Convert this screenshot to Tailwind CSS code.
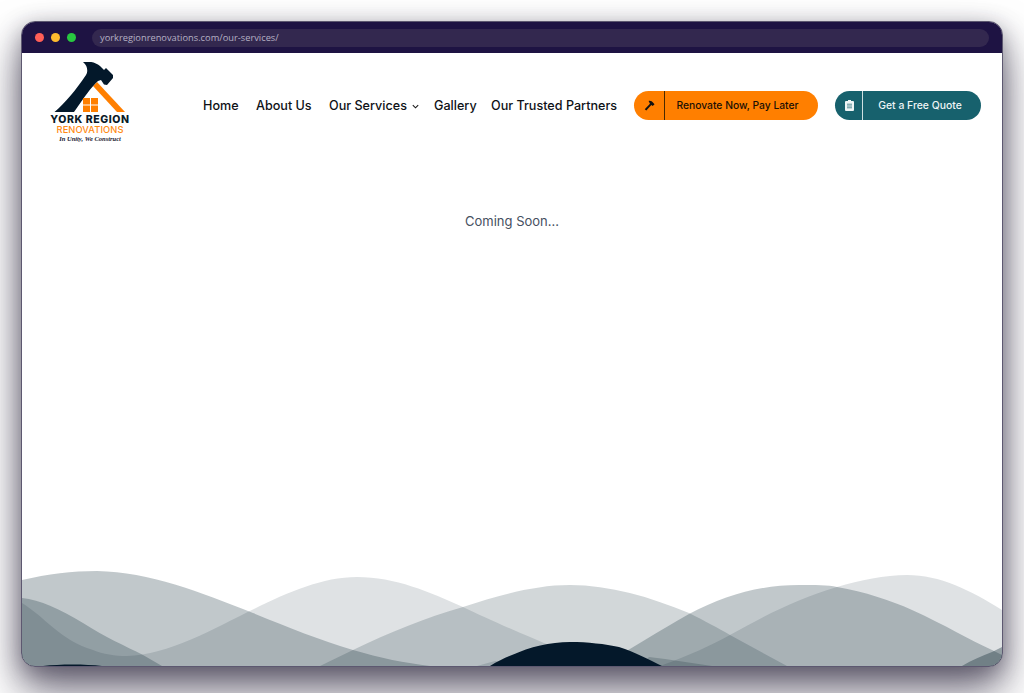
<!DOCTYPE html>
<html>
<head>
<meta charset="utf-8">
<script src="https://cdn.jsdelivr.net/npm/@tailwindcss/browser@4"></script>
</head>
<body class="m-0 h-[693px] w-[1024px] overflow-hidden bg-white font-['Inter','Liberation_Sans',sans-serif]">
<div class="pt-[21px] pl-[21px]">
  <div class="relative flex h-[646px] w-[982px] flex-col overflow-hidden rounded-[14px] border border-[#5d5870] bg-white shadow-[0_24px_44px_rgba(30,24,48,0.62),0_6px_22px_rgba(30,24,48,0.36)]">
    <div class="flex h-[31px] shrink-0 items-center gap-[7px] bg-[#1e1343] pl-[13px] pr-[13px]">
      <span class="size-[9px] rounded-full bg-[#ff5f57]"></span>
      <span class="size-[9px] rounded-full bg-[#febc2e]"></span>
      <span class="size-[9px] rounded-full bg-[#28c840]"></span>
      <div class="ml-[9px] flex h-[18px] flex-1 items-center rounded-[9px] bg-[#33284f] pl-[8px] text-[9.3px] text-[#b5b0c4] font-['Open_Sans',sans-serif]">yorkregionrenovations.com/our-services/</div>
    </div>
    <header class="flex h-[106px] shrink-0 items-start">
      <div class="ml-[28px] mt-[9px] flex w-[80px] flex-col items-center">
        <svg class="h-[50px] w-[80px]" viewBox="50 62 80 50" aria-hidden="true">
          <path d="M93 86 L97 82 L125 112 L117 112 Z" fill="#ff7f00"/>
          <path d="M83 62 C89 61 95 62 100 66 L104 70 L106 68 L113 75 L113 78 L107 85 L104 84.5 L101 80 L98 81 C92 86 83 99 74 112 L54.5 112 C65 103 76 90 86 75 C88 72 88 66 83 62 Z" fill="#03182a"/>
          <g fill="#ff7f00">
            <rect x="83" y="98" width="7" height="6.5"/><rect x="91" y="98" width="7" height="6.5"/>
            <rect x="83" y="105.5" width="7" height="6.5"/><rect x="91" y="105.5" width="7" height="6.5"/>
          </g>
        </svg>
        <div class="mt-[2px] whitespace-nowrap text-[10.5px] leading-[11px] font-extrabold tracking-[0.055em] text-[#0b1a28]">YORK REGION</div>
        <div class="mt-[-1px] whitespace-nowrap text-[9.3px] leading-[11px] font-medium tracking-[0.01em] text-[#ff8a14]">RENOVATIONS</div>
        <div class="mt-[0px] whitespace-nowrap text-[6.5px] leading-[8px] font-bold italic text-[#1a2030] font-['Liberation_Serif',serif]">In Unity, We Construct</div>
      </div>
      <nav class="ml-[73px] mt-[39px] flex h-[29px] items-center gap-[17px] text-[12.6px] font-medium whitespace-nowrap text-[#0e1116]">
        <a class="w-[36px]">Home</a>
        <a class="w-[56px]">About Us</a>
        <a class="flex w-[88px] items-center gap-[4px]">Our Services
          <svg class="size-[9px] shrink-0" viewBox="0 0 10 10" fill="none" stroke="#1a1a1a" stroke-width="1.2"><path d="M2 3.5 L5 6.5 L8 3.5"/></svg>
        </a>
        <a class="w-[40px]">Gallery</a>
        <a class="w-[126px]">Our Trusted Partners</a>
      </nav>
      <div class="ml-[17px] mt-[38px] flex h-[29px] w-[184px] items-center rounded-full bg-[#ff7f00] text-[10.3px] font-medium text-[#1a1005]">
        <span class="flex h-full w-[31px] items-center justify-center border-r border-[#4a2a00]">
          <svg class="ml-[1px] size-[11px]" viewBox="0 0 12 12" fill="#111"><path d="M5 1 C7 0.5 9 1.5 10 3 L11.5 4.5 L9.5 6.5 L8 5.5 L2.5 11.5 L0.8 10 L6.5 4 L5 1 Z"/></svg>
        </span>
        <span class="flex-1 pr-[8px] text-center whitespace-nowrap">Renovate Now, Pay Later</span>
      </div>
      <div class="ml-[17px] mt-[38px] flex h-[29px] w-[146px] items-center rounded-full bg-[#17616d] text-[10.4px] font-medium text-[#eef5f6]">
        <span class="flex h-full w-[28px] items-center justify-center border-r border-[#cfe0e2]">
          <svg class="ml-[1px] h-[11px] w-[9px]" viewBox="0 0 9 11" fill="#eef5f6"><path d="M3 0 H6 V1 H8 Q9 1 9 2 V10 Q9 11 8 11 H1 Q0 11 0 10 V2 Q0 1 1 1 H3 Z"/><path d="M2 4.2 H7 M2 6 H7 M2 7.8 H7" stroke="#17616d" stroke-width="0.7"/></svg>
        </span>
        <span class="flex-1 pr-[4px] text-center whitespace-nowrap">Get a Free Quote</span>
      </div>
    </header>
    <main class="flex-1 pt-[53px] text-center text-[13px] text-[#46505f]">Coming Soon...</main>
    <svg class="absolute bottom-0 left-0 h-[106px] w-[980px]" viewBox="22 560 980 106" aria-hidden="true">
      <g fill="#08222e">
        <path opacity=".25" d="M22 580 C48 574 72 571 97 571 C150 572 200 592 253 613 C290 628 320 640 353 650 C380 658 405 663 430 666 L22 666 Z"/>
        <path opacity=".13" d="M22 603 C45 617 60 640 93 650 C103 654 115 656 127 656 C200 654 280 577 357 577 C395 577 430 592 463 607 C500 625 560 650 600 666 L22 666 Z"/>
        <path opacity=".25" d="M22 598 C40 600 60 609 83 623 C105 637 125 646 143 655 L162 666 L22 666 Z"/>
        <path opacity=".18" d="M320 666 L353 650 C390 632 425 618 463 607 C500 595 535 585 570 585 C610 585 650 597 689 613 C705 621 718 628 730 635 L787 666 Z"/>
        <path opacity=".25" d="M600 666 C630 650 660 630 689 614 C725 595 760 585 799 585 C815 585 828 585 837 587 C865 592 890 600 912 610 C945 625 970 640 992 650 L1002 655 L1002 666 Z"/>
        <path opacity=".13" d="M660 666 C690 655 712 645 730 635 C765 615 800 598 837 587 C860 580 885 575 907 575 C940 575 970 590 1002 610 L1002 666 Z"/>
        <path opacity=".2" d="M649 657 L665 659 L712 666 L640 666 Z"/>
        <path opacity=".35" d="M962 666 C972 660 982 656 992 652 L1002 647 L1002 666 Z"/>
        <path opacity=".15" d="M477 666 L495 661 L530 666 Z"/>
      </g>
      <g fill="#04182a">
        <path d="M490 666 C498 661 505 658 512 655 C530 647 550 642 570 642 C588 642 605 644 619 647 C635 652 650 660 662 666 Z"/>
        <path d="M43 666 C60 664 85 664 102 666 Z"/>
      </g>
    </svg>
  </div>
</div>
</body>
</html>
